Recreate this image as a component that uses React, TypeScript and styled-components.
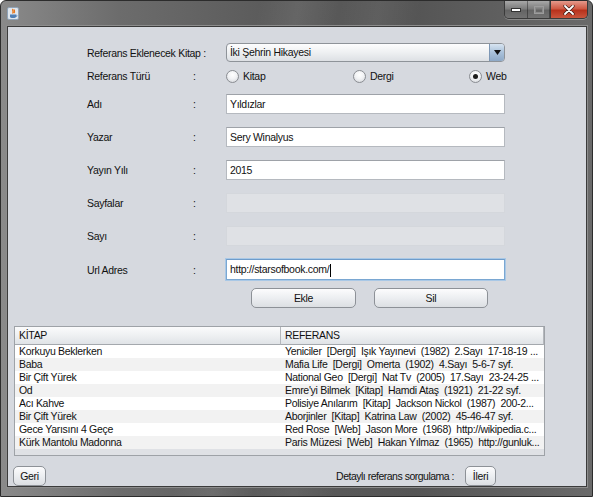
import React from "react";
import styled, { createGlobalStyle } from "styled-components";

const GlobalStyle = createGlobalStyle`
  html, body { margin: 0; padding: 0; background: #ffffff; }
  body { font-family: "Liberation Sans", Arial, sans-serif; }
  * { box-sizing: border-box; }
`;

const FONT = `"Liberation Sans", Arial, sans-serif`;

const Window = styled.div`
  width: 593px;
  height: 497px;
  display: flex;
  flex-direction: column;
  border-radius: 6px 6px 0 0;
  overflow: hidden;
  border: 1px solid #2c2c2c;
  background:
    linear-gradient(100deg, rgba(255,255,255,0) 38%, rgba(255,255,255,0.07) 44%, rgba(255,255,255,0) 50%, rgba(255,255,255,0.05) 56%, rgba(255,255,255,0) 62%),
    linear-gradient(90deg, #8a8a8a 0%, #6c6c6c 20%, #5b5b5b 45%, #555555 70%, #6a6a6a 100%);
`;

const TitleBar = styled.div`
  height: 25px;
  display: flex;
  align-items: flex-start;
  padding-left: 6px;
  padding-right: 4px;
`;

const AppIcon = styled.svg`
  margin-top: 6px;
  width: 12px;
  height: 13px;
`;

const Spacer = styled.div`
  flex: 1;
`;

const Controls = styled.div`
  display: flex;
  height: 18px;
  border: 1px solid #3a3a3a;
  border-top: none;
  border-radius: 0 0 5px 5px;
  overflow: hidden;
  box-shadow: 0 1px 0 rgba(255,255,255,0.25);
`;

const CtrlButton = styled.div<{ $w: number; $close?: boolean }>`
  width: ${(p) => p.$w}px;
  height: 100%;
  display: flex;
  align-items: center;
  justify-content: center;
  border-left: ${(p) => (p.$close ? "1px solid #3a3a3a" : "none")};
  border-right: 1px solid rgba(0,0,0,0.35);
  background: ${(p) =>
    p.$close
      ? "linear-gradient(180deg, #e59a8c 0%, #cf5a44 45%, #b8321c 55%, #c9553d 100%)"
      : "linear-gradient(180deg, #a8a8a8 0%, #7d7d7d 45%, #646464 55%, #727272 100%)"};
  &:last-child { border-right: none; }
`;

const Panel = styled.div`
  flex: 1;
  margin: 0 5px 9px 6px;
  background: #d6d9df;
  border: 1px solid #3b3b3b;
  box-shadow: 0 0 0 1px #8d8d8d;
  display: flex;
  flex-direction: column;
  font-family: ${FONT};
  font-size: 10.5px;
  letter-spacing: -0.3px;
  color: #111;
`;

const Form = styled.div`
  margin-top: 16px;
  padding-left: 79px;
  display: flex;
  flex-direction: column;
`;

const FieldRows = styled.div`
  margin-top: 10px;
  display: flex;
  flex-direction: column;
  gap: 13px;
`;

const Row = styled.div`
  display: grid;
  grid-template-columns: 106px 33px 279px;
  align-items: center;
`;

const RadioRowWrap = styled(Row)`
  margin-top: 6px;
  height: 16px;
`;

const Label = styled.div<{ $span?: boolean }>`
  grid-column: ${(p) => (p.$span ? "1 / span 2" : "auto")};
  white-space: nowrap;
`;

const Colon = styled.div``;

const Combo = styled.div`
  height: 19px;
  display: flex;
  border: 1px solid #8e9399;
  border-radius: 4px;
  overflow: hidden;
  background: linear-gradient(180deg, #fdfdfe 0%, #eef0f2 50%, #dde0e4 100%);
`;

const ComboText = styled.div`
  flex: 1;
  padding-left: 3px;
  line-height: 17px;
`;

const ComboArrow = styled.div`
  width: 15px;
  display: flex;
  align-items: center;
  justify-content: center;
  border-left: 1px solid #7d97b5;
  background: linear-gradient(180deg, #d7e4f1 0%, #a9c1da 50%, #8ea9c7 100%);
`;

const RadioGroup = styled.div`
  display: grid;
  grid-template-columns: 127px 116px 1fr;
  align-items: center;
`;

const RadioItem = styled.div`
  display: flex;
  align-items: center;
  gap: 4px;
`;

const RadioCircle = styled.div<{ $checked?: boolean }>`
  width: 13px;
  height: 13px;
  border-radius: 50%;
  border: 1px solid #8a8d92;
  background: radial-gradient(circle at 50% 35%, #ffffff 0%, #f2f3f5 45%, #cfd2d7 100%);
  display: flex;
  align-items: center;
  justify-content: center;
  &::after {
    content: "";
    display: ${(p) => (p.$checked ? "block" : "none")};
    width: 5px;
    height: 5px;
    border-radius: 50%;
    background: #1c1c1c;
  }
`;

const TextField = styled.div<{ $disabled?: boolean; $focused?: boolean }>`
  padding-left: 3px;
  line-height: 18px;
  white-space: nowrap;
  background: ${(p) => (p.$disabled ? "#dfe1e5" : "#ffffff")};
  border: 1px solid ${(p) => (p.$disabled ? "#d4d7dc" : p.$focused ? "#7aa7d2" : "#b5b9bf")};
  border-top-color: ${(p) => (p.$disabled ? "#d4d7dc" : p.$focused ? "#6e9ccb" : "#9ea2a8")};
  box-shadow: ${(p) => (p.$focused ? "0 0 0 1px #a9c8e6" : "none")};
  height: ${(p) => (p.$focused ? "21px" : "20px")};
`;

const Caret = styled.span`
  display: inline-block;
  width: 1px;
  height: 13px;
  background: #000;
  vertical-align: middle;
  margin-left: 1px;
`;

const ActionRow = styled.div`
  margin-top: 8px;
  padding-left: 164px;
  display: flex;
  gap: 18px;
`;

const Button = styled.div<{ $w: number }>`
  width: ${(p) => p.$w}px;
  height: 20px;
  display: flex;
  align-items: center;
  justify-content: center;
  border: 1px solid #8d9197;
  border-radius: 5px;
  background: linear-gradient(180deg, #fcfcfd 0%, #eceef1 50%, #dcdfe3 100%);
  color: #111;
`;

const TableScroll = styled.div`
  margin: 18px 41px 0 6px;
  height: 130px;
  border: 1px solid #9ea2a7;
  background: #dfe1e5;
  display: flex;
  flex-direction: column;
`;

const Grid = styled.div`
  display: grid;
  grid-template-columns: 266px 1fr;
`;

const HeadCell = styled.div`
  height: 18px;
  padding-left: 4px;
  line-height: 17px;
  background: linear-gradient(180deg, #fbfbfc 0%, #eef0f2 50%, #e0e3e7 100%);
  border-bottom: 1px solid #a4a8ad;
  border-right: 1px solid #b4b7bc;
  &:last-child { border-right: none; }
`;

const Cell = styled.div<{ $alt: boolean }>`
  height: 13px;
  line-height: 13px;
  padding-left: 4px;
  white-space: pre;
  overflow: hidden;
  background: ${(p) => (p.$alt ? "#f2f2f2" : "#ffffff")};
`;

const BottomBar = styled.div`
  margin-top: 10px;
  padding: 0 90px 0 5px;
  display: flex;
  align-items: center;
  justify-content: space-between;
`;

const BottomRight = styled.div`
  display: flex;
  align-items: center;
  gap: 11px;
`;

const BottomLabel = styled.span`
  letter-spacing: -0.5px;
`;

const rows: [string, string][] = [
  ["Korkuyu Beklerken", "Yeniciler  [Dergi]  Işık Yayınevi  (1982)  2.Sayı  17-18-19 ..."],
  ["Baba", "Mafia Life  [Dergi]  Omerta  (1902)  4.Sayı  5-6-7 syf."],
  ["Bir Çift Yürek", "National Geo  [Dergi]  Nat Tv  (2005)  17.Sayı  23-24-25 ..."],
  ["Od", "Emre'yi Bilmek  [Kitap]  Hamdi Ataş  (1921)  21-22 syf."],
  ["Acı Kahve", "Polisiye Anılarım  [Kitap]  Jackson Nickol  (1987)  200-2..."],
  ["Bir Çift Yürek", "Aborjinler  [Kitap]  Katrina Law  (2002)  45-46-47 syf."],
  ["Gece Yarısını 4 Geçe", "Red Rose  [Web]  Jason More  (1968)  http://wikipedia.c..."],
  ["Kürk Mantolu Madonna", "Paris Müzesi  [Web]  Hakan Yılmaz  (1965)  http://gunluk..."],
];

const fields: { label: string; value: string; disabled?: boolean; focused?: boolean }[] = [
  { label: "Adı", value: "Yıldızlar" },
  { label: "Yazar", value: "Sery Winalyus" },
  { label: "Yayın Yılı", value: "2015" },
  { label: "Sayfalar", value: "", disabled: true },
  { label: "Sayı", value: "", disabled: true },
  { label: "Url Adres", value: "http://starsofbook.com/", focused: true },
];

export default function App() {
  return (
    <>
      <GlobalStyle />
      <Window>
        <TitleBar>
          <AppIcon viewBox="0 0 12 13">
            <rect x="0.5" y="0.5" width="11" height="12" rx="1.5" fill="#dfe6ee" stroke="#8fa3b8" />
            <path d="M6 2 C4.5 3.5 7.5 4.5 5.5 6.5 M7.5 2.5 C6.5 3.8 8.5 4.5 7 6" stroke="#e8771a" strokeWidth="1.3" fill="none" />
            <path d="M3 7.5 H9 V9.5 C9 10.6 8 11 6 11 C4 11 3 10.6 3 9.5 Z" fill="#4f7fb6" />
            <path d="M9 8 C10.4 8 10.4 9.6 9 9.6" stroke="#4f7fb6" strokeWidth="0.8" fill="none" />
          </AppIcon>
          <Spacer />
          <Controls>
            <CtrlButton $w={23}>
              <svg width="10" height="4" viewBox="0 0 10 4">
                <rect x="0.5" y="0.5" width="9" height="3" fill="#ffffff" stroke="#333" strokeWidth="1" />
              </svg>
            </CtrlButton>
            <CtrlButton $w={22}>
              <svg width="10" height="8" viewBox="0 0 10 8">
                <rect x="0.5" y="0.5" width="9" height="7" fill="none" stroke="#9c9c9c" strokeWidth="1" />
                <rect x="1.5" y="1.5" width="7" height="5" fill="none" stroke="#8a8a8a" strokeWidth="1" />
              </svg>
            </CtrlButton>
            <CtrlButton $w={37} $close>
              <svg width="12" height="10" viewBox="0 0 12 10">
                <path d="M2 1 L10 9 M10 1 L2 9" stroke="#3a1a14" strokeWidth="3.2" strokeLinecap="round" />
                <path d="M2 1 L10 9 M10 1 L2 9" stroke="#ffffff" strokeWidth="1.8" strokeLinecap="round" />
              </svg>
            </CtrlButton>
          </Controls>
        </TitleBar>
        <Panel>
          <Form>
            <Row>
              <Label $span>Referans Eklenecek Kitap :</Label>
              <Combo>
                <ComboText>İki Şehrin Hikayesi</ComboText>
                <ComboArrow>
                  <svg width="7" height="5" viewBox="0 0 7 5">
                    <path d="M0 0 H7 L3.5 5 Z" fill="#111" />
                  </svg>
                </ComboArrow>
              </Combo>
            </Row>
            <RadioRowWrap>
              <Label>Referans Türü</Label>
              <Colon>:</Colon>
              <RadioGroup>
                <RadioItem>
                  <RadioCircle />
                  Kitap
                </RadioItem>
                <RadioItem>
                  <RadioCircle />
                  Dergi
                </RadioItem>
                <RadioItem>
                  <RadioCircle $checked />
                  Web
                </RadioItem>
              </RadioGroup>
            </RadioRowWrap>
            <FieldRows>
              {fields.map((f) => (
                <Row key={f.label}>
                  <Label>{f.label}</Label>
                  <Colon>:</Colon>
                  <TextField $disabled={f.disabled} $focused={f.focused}>
                    {f.value}
                    {f.focused && <Caret />}
                  </TextField>
                </Row>
              ))}
            </FieldRows>
            <ActionRow>
              <Button $w={105}>Ekle</Button>
              <Button $w={114}>Sil</Button>
            </ActionRow>
          </Form>
          <TableScroll>
            <Grid>
              <HeadCell>KİTAP</HeadCell>
              <HeadCell>REFERANS</HeadCell>
              {rows.map(([a, b], i) => (
                <React.Fragment key={i}>
                  <Cell $alt={i % 2 === 1}>{a}</Cell>
                  <Cell $alt={i % 2 === 1}>{b}</Cell>
                </React.Fragment>
              ))}
            </Grid>
          </TableScroll>
          <BottomBar>
            <Button $w={33}>Geri</Button>
            <BottomRight>
              <BottomLabel>Detaylı referans sorgulama :</BottomLabel>
              <Button $w={31}>İleri</Button>
            </BottomRight>
          </BottomBar>
        </Panel>
      </Window>
    </>
  );
}
